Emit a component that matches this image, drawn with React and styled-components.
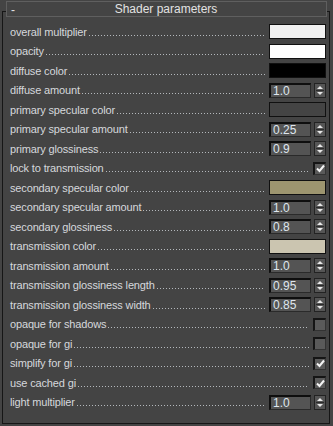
import React from 'react'
import styled, { createGlobalStyle } from 'styled-components'

const Global = createGlobalStyle`
  html, body {
    margin: 0;
    padding: 0;
    background: #444444;
  }
  body {
    font-family: 'Liberation Sans', Arial, sans-serif;
    font-size: 11px;
    color: #dadada;
  }
`

const Page = styled.div`
  width: 333px;
  height: 426px;
  box-sizing: border-box;
  padding: 11px 3px 2px 2px;
  background: #444444;
`

const Frame = styled.div`
  height: 100%;
  box-sizing: border-box;
  border: 1px solid #161616;
  display: flex;
  flex-direction: column;
`

const Header = styled.div`
  margin: -11px 2px 0 3px;
  height: 16px;
  box-sizing: border-box;
  border: 1px solid #5f5f5f;
  background: #444444;
  display: flex;
  align-items: center;
  position: relative;
  color: #e2e2e2;
  font-size: 12px;
`

const Minus = styled.span`
  position: absolute;
  left: 4px;
  top: 1px;
`

const Title = styled.span`
  flex: 1;
  text-align: center;
  padding-right: 1px;
`

const List = styled.div`
  padding: 5px 3px 0 7px;
  display: flex;
  flex-direction: column;
`

const Row = styled.div`
  height: 19.5px;
  display: flex;
  align-items: center;
`

const Label = styled.span`
  white-space: nowrap;
  letter-spacing: -0.15px;
  color: #d6d8dc;
`

const Leader = styled.span`
  flex: 1;
  height: 1px;
  margin: 7px 4px 0 2px;
  background-image: linear-gradient(to right, #b4b8bc 1px, transparent 1px);
  background-size: 3px 1px;
`

const Swatch = styled.div`
  width: 57px;
  height: 15px;
  box-sizing: border-box;
  border: 1px solid #101010;
  background: ${p => p.$color};
`

const Spinner = styled.div`
  display: flex;
  gap: 3px;
  align-items: center;
`

const NumberBox = styled.div`
  width: 42px;
  height: 15px;
  box-sizing: border-box;
  border-top: 2px solid #0e0e0e;
  border-left: 2px solid #0e0e0e;
  border-right: 1px solid #2a2a2a;
  border-bottom: 1px solid #2a2a2a;
  background: #545454;
  color: #dfe6ee;
  font-size: 12px;
  line-height: 12px;
  padding-left: 2px;
`

const SpinButtons = styled.div`
  width: 12px;
  height: 15px;
  box-sizing: border-box;
  border: 1px solid #232323;
  background: #555555;
  display: flex;
`

const Check = styled.div`
  width: 13px;
  height: 13px;
  box-sizing: border-box;
  border-top: 2px solid #151515;
  border-left: 2px solid #151515;
  border-right: 1px solid #333333;
  border-bottom: 1px solid #333333;
  background: #5a5a5a;
  display: flex;
  align-items: center;
  justify-content: center;
`

const rows = [
  { label: 'overall multiplier', kind: 'color', value: '#f0f0f0' },
  { label: 'opacity', kind: 'color', value: '#ffffff' },
  { label: 'diffuse color', kind: 'color', value: '#000000' },
  { label: 'diffuse amount', kind: 'number', value: '1.0' },
  { label: 'primary specular color', kind: 'color', value: '#444444' },
  { label: 'primary specular amount', kind: 'number', value: '0.25' },
  { label: 'primary glossiness', kind: 'number', value: '0.9' },
  { label: 'lock to transmission', kind: 'check', value: true },
  { label: 'secondary specular color', kind: 'color', value: '#9d956f' },
  { label: 'secondary specular amount', kind: 'number', value: '1.0' },
  { label: 'secondary glossiness', kind: 'number', value: '0.8' },
  { label: 'transmission color', kind: 'color', value: '#cbc5b0' },
  { label: 'transmission amount', kind: 'number', value: '1.0' },
  { label: 'transmission glossiness length', kind: 'number', value: '0.95' },
  { label: 'transmission glossiness width', kind: 'number', value: '0.85' },
  { label: 'opaque for shadows', kind: 'check', value: false },
  { label: 'opaque for gi', kind: 'check', value: false },
  { label: 'simplify for gi', kind: 'check', value: true },
  { label: 'use cached gi', kind: 'check', value: true },
  { label: 'light multiplier', kind: 'number', value: '1.0' },
]

const Arrows = () => (
  <svg width="10" height="13" viewBox="0 0 10 13">
    <path d="M5 2 L8 5 L2 5 Z" fill="#e8e8e8" />
    <line x1="1" y1="6.5" x2="9" y2="6.5" stroke="#2c2c2c" />
    <path d="M2 8 L8 8 L5 11 Z" fill="#e8e8e8" />
  </svg>
)

const Tick = () => (
  <svg width="9" height="9" viewBox="0 0 9 9">
    <path d="M1 4.5 L3.5 7 L8 1.5" fill="none" stroke="#f4f4f4" strokeWidth="2" />
  </svg>
)

const Control = ({ kind, value }) => {
  if (kind === 'color') return <Swatch $color={value} />
  if (kind === 'number') {
    return (
      <Spinner>
        <NumberBox>{value}</NumberBox>
        <SpinButtons><Arrows /></SpinButtons>
      </Spinner>
    )
  }
  return <Check>{value && <Tick />}</Check>
}

const App = () => (
  <Page>
    <Global />
    <Frame>
      <Header>
        <Minus>-</Minus>
        <Title>Shader parameters</Title>
      </Header>
      <List>
        {rows.map(r => (
          <Row key={r.label}>
            <Label>{r.label}</Label>
            <Leader />
            <Control kind={r.kind} value={r.value} />
          </Row>
        ))}
      </List>
    </Frame>
  </Page>
)

export default App
